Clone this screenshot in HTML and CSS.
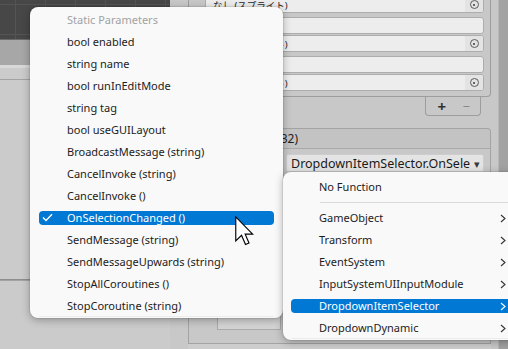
FILE: index.html
```html
<!DOCTYPE html>
<html lang="ja">
<head>
    <meta charset="UTF-8">
    <title>Inspector - Event function menu</title>
    <link rel="stylesheet" href="styles.css">
</head>
<body>
    <div class="editor">
        <div class="left">
            <div class="scene"></div>
            <div class="scene-bar"></div>
            <div class="hier">
                <div class="hier-row first"></div>
                <div class="hier-row tall"></div>
                <div class="hier-row"></div>
            </div>
        </div>

        <div class="inspector">
            <div class="list">
                <div class="pair">
                    <div class="field"></div>
                    <div class="field obj"><span class="obj-name">なし (スプライト)</span><span class="picker"><i class="target"></i></span></div>
                </div>
                <div class="pair">
                    <div class="field"></div>
                    <div class="field obj"><span class="obj-name">なし (スプライト)</span><span class="picker"><i class="target"></i></span></div>
                </div>
                <div class="pair">
                    <div class="field"></div>
                    <div class="field obj"><span class="obj-name">なし (スプライト)</span><span class="picker"><i class="target"></i></span></div>
                </div>
            </div>
            <div class="list-footer">
                <span class="plus">+</span>
                <span class="minus">−</span>
            </div>

            <div class="event">
                <div class="event-head"><div class="event-title"><span>On Value Changed (Int32)</span></div></div>
                <div class="event-body">
                    <div class="event-target">
                        <div class="mini-field"></div>
                        <div class="mini-field obj-box"></div>
                    </div>
                    <div class="func-drop">
                        <span class="func-name">DropdownItemSelector.OnSelectionChanged</span>
                        <span class="caret">▾</span>
                    </div>
                </div>
            </div>
            <div class="status"></div>
        </div>

        <div class="scrollbar"></div>
    </div>

    <!-- function popup -->
    <div class="menu main-menu">
        <div class="item disabled">Static Parameters</div>
        <div class="item">bool enabled</div>
        <div class="item">string name</div>
        <div class="item">bool runInEditMode</div>
        <div class="item">string tag</div>
        <div class="item">bool useGUILayout</div>
        <div class="item">BroadcastMessage (string)</div>
        <div class="item">CancelInvoke (string)</div>
        <div class="item">CancelInvoke ()</div>
        <div class="item selected">
            <svg class="check" width="11" height="9" viewBox="0 0 11 9"><path d="M1 4.6 L4 7.6 L10 1.2" fill="none" stroke="#fff" stroke-width="1.4"/></svg>
            OnSelectionChanged ()
        </div>
        <div class="item">SendMessage (string)</div>
        <div class="item">SendMessageUpwards (string)</div>
        <div class="item">StopAllCoroutines ()</div>
        <div class="item last">StopCoroutine (string)</div>
    </div>

    <div class="menu sub-menu">
        <div class="item">No Function</div>
        <div class="sep"></div>
        <div class="item sub">GameObject<svg class="chev" width="6" height="9" viewBox="0 0 6 9"><path d="M1 1 L5 4.5 L1 8" fill="none" stroke="#333" stroke-width="1.1"/></svg></div>
        <div class="item sub">Transform<svg class="chev" width="6" height="9" viewBox="0 0 6 9"><path d="M1 1 L5 4.5 L1 8" fill="none" stroke="#333" stroke-width="1.1"/></svg></div>
        <div class="item sub">EventSystem<svg class="chev" width="6" height="9" viewBox="0 0 6 9"><path d="M1 1 L5 4.5 L1 8" fill="none" stroke="#333" stroke-width="1.1"/></svg></div>
        <div class="item sub">InputSystemUIInputModule<svg class="chev" width="6" height="9" viewBox="0 0 6 9"><path d="M1 1 L5 4.5 L1 8" fill="none" stroke="#333" stroke-width="1.1"/></svg></div>
        <div class="item sub selected">DropdownItemSelector<svg class="chev" width="6" height="9" viewBox="0 0 6 9"><path d="M1 1 L5 4.5 L1 8" fill="none" stroke="#fff" stroke-width="1.1"/></svg></div>
        <div class="item sub last">DropdownDynamic<svg class="chev" width="6" height="9" viewBox="0 0 6 9"><path d="M1 1 L5 4.5 L1 8" fill="none" stroke="#333" stroke-width="1.1"/></svg></div>
    </div>

    <svg class="cursor" width="19" height="30" viewBox="0 0 12.5 19.5">
        <path d="M0.5 0.5 L0.5 16.2 L4.3 12.6 L6.9 18.6 L9.2 17.6 L6.7 11.8 L11.6 11.8 Z" fill="#fff" stroke="#000" stroke-width="0.75" stroke-linejoin="miter"/>
    </svg>
</body>
</html>
```

FILE: styles.css
```css
* { box-sizing: border-box; }
body { margin: 0; width: 508px; height: 349px; overflow: hidden; position: relative; font-family: "Noto Sans", "Noto Sans CJK JP", sans-serif; font-size: 11px; background: #c8c8c8; }

.editor { display: flex; height: 349px; }

/* left side: scene + hierarchy */
.left { width: 170px; flex-shrink: 0; display: flex; flex-direction: column; }
.scene { height: 39px; background-color: #474747;
    background-image: linear-gradient(90deg, #545454 1px, transparent 1px), linear-gradient(#545454 1px, transparent 1px);
    background-size: 30px 100%, 100% 30px; background-position: 15px 0, 0 4px; }
.scene-bar { height: 26px; background: #a7a7a7; border-top: 1px solid #6a6a6a; }
.hier { flex: 1; background: #cbcbcb; border-top: 3px solid #d8d8d8; }
.hier-row { border-bottom: 1px solid #a3a3a3; }
.hier-row.first { height: 12px; }
.hier-row.tall { height: 200px; border-bottom-color: #8e8e8e; }

/* inspector */
.inspector { flex: 1; min-width: 0; padding: 0 7px 0 18px; display: flex; flex-direction: column; background: #c8c8c8; }
.list { margin-top: -22px; border: 1px solid #9d9d9d; border-top: none; border-radius: 0 0 4px 4px; padding: 0 6px 5px 16px; display: flex; flex-direction: column; gap: 4px; }
.pair { display: flex; flex-direction: column; gap: 1px; }
.field { height: 17px; background: #ededed; border: 1px solid #adadad; border-radius: 3px; display: flex; align-items: center; overflow: hidden; }
.obj-name { flex: 1; padding-left: 7px; color: #1e1e1e; white-space: nowrap; font-size: 9.5px; }
.picker { width: 18px; height: 100%; background: #e3e3e3; display: flex; align-items: center; justify-content: center; }
.target { width: 9px; height: 9px; border: 1px solid #5a5a5a; border-radius: 50%; position: relative; }
.target::after { content: ""; position: absolute; left: 2.5px; top: 2.5px; width: 2px; height: 2px; border-radius: 50%; background: #3a3a3a; }

.list-footer { align-self: flex-end; margin-right: 10px; width: 56px; height: 19px; border: 1px solid #9d9d9d; border-top: none; border-radius: 0 0 4px 4px; display: flex; align-items: center; }
.plus { width: 20px; text-align: right; font-size: 15px; font-weight: bold; color: #303030; line-height: 1; }
.minus { width: 24px; text-align: right; font-size: 13px; color: #8a8a8a; line-height: 1; }

.event { margin-top: 12px; border: 1px solid #a3a3a3; border-radius: 4px 4px 0 0; border-bottom: none; }
.event-head { height: 20px; background: #c3c3c3; border-bottom: 1px solid #a8a8a8; display: flex; align-items: center; border-radius: 4px 4px 0 0; }
.event-title { width: 109px; display: flex; justify-content: flex-end; white-space: nowrap; overflow: hidden; color: #1e1e1e; font-size: 12px; }
.event-title span { flex-shrink: 0; }
.event-body { display: grid; grid-template-columns: 92px minmax(0, 1fr); gap: 5px; padding: 5px 6px 0 0; height: 194px; }
.event-target { display: flex; flex-direction: column; gap: 4px; }
.mini-field { height: 18px; }
.obj-box { margin-top: 120px; margin-left: 28px; height: 34px; background: #d4d4d4; border: 1px solid #a9a9a9; border-top: none; }
.func-drop { min-width: 0; height: 18px; background: #e4e4e4; border: 1px solid #cdcdcd; border-radius: 2px; display: flex; align-items: center; padding-left: 4px; }
.func-name { flex: 1; min-width: 0; overflow: hidden; white-space: nowrap; color: #1a1a1a; font-size: 12.5px; }
.caret { width: 13px; text-align: center; font-size: 11px; color: #3a3a3a; }
.status { flex: 1; border-top: 1px solid #a3a3a3; background: #cdcdcd; }

.scrollbar { width: 10px; flex-shrink: 0; background: #a2a2a2; border-left: 1px solid #b8b8b8; }

/* popup menus */
.menu { position: absolute; background: #f9f9f9; border-radius: 8px; box-shadow: 0 2px 9px rgba(0,0,0,.3), 0 0 0 1px rgba(0,0,0,.07); color: #1c1c1c; }
.main-menu { left: 30px; top: 7px; width: 253px; padding: 2px 0 1px; }
.sub-menu { left: 283px; top: 172px; width: 240px; padding: 4px 0 1px; }
.item { height: 22px; line-height: 22px; padding-left: 28px; margin: 0 9px; position: relative; isolation: isolate; white-space: nowrap; }
.sub-menu .item { margin: 0 8px; }
.item.disabled { color: #a2a2a2; }
.item.selected { color: #fff; }
.item.selected::before { content: ""; position: absolute; left: 0; right: 0; top: 4px; height: 14px; background: #0078d4; border-radius: 4px; z-index: -1; }
.item.last { border-bottom: 1px solid #ececec; }
.check { position: absolute; left: 3px; top: 6px; }
.chev { position: absolute; right: 9px; top: 7px; }
.sep { height: 9px; margin-left: 37px; position: relative; }
.sep::after { content: ""; position: absolute; left: 0; right: 0; top: 4px; height: 1px; background: #dadada; }

.cursor { position: absolute; left: 235px; top: 216px; }
```
